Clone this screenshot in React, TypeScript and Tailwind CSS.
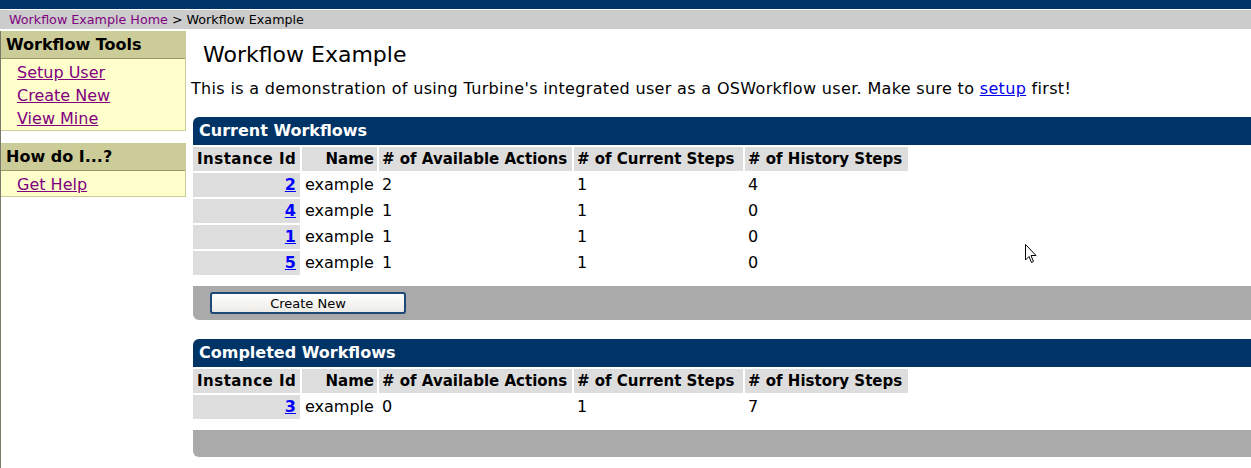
import React from "react";

const FONT = { fontFamily: '"DejaVu Sans", Verdana, sans-serif' };

type Row = { id: string; name: string; actions: string; current: string; history: string };

const CURRENT: Row[] = [
  { id: "2", name: "example", actions: "2", current: "1", history: "4" },
  { id: "4", name: "example", actions: "1", current: "1", history: "0" },
  { id: "1", name: "example", actions: "1", current: "1", history: "0" },
  { id: "5", name: "example", actions: "1", current: "1", history: "0" },
];

const COMPLETED: Row[] = [
  { id: "3", name: "example", actions: "0", current: "1", history: "7" },
];

const GRID = "grid grid-cols-[107px_75px_193px_169px_163px] gap-[2px] w-[715px]";

function SideBox({ title, links }: { title: string; links: string[] }) {
  return (
    <div className="border-r border-b border-[#cccc99] bg-[#ffffcc]">
      <div className="h-[28px] bg-[#cccc99] border-b border-[#999966] pl-[5px] text-[16px] font-bold leading-[27px] text-black">
        {title}
      </div>
      <ul className="pl-[16px] pt-[2px]">
        {links.map((l) => (
          <li key={l} className="h-[23px] leading-[23px] text-[16px]">
            <a href="#" className="text-[#800080] underline">
              {l}
            </a>
          </li>
        ))}
      </ul>
    </div>
  );
}

function WorkflowTable({
  title,
  rows,
  button,
}: {
  title: string;
  rows: Row[];
  button?: boolean;
}) {
  const head = "bg-[#dddddd] h-[24px] leading-[24px] text-[15px] font-bold text-black px-[3px] whitespace-nowrap";
  const cell = "h-[24px] leading-[24px] text-[16px] text-black px-[3px]";
  return (
    <section>
      <div className="h-[28px] bg-[#003366] rounded-tl-[6px] pl-[6px] text-[16px] font-bold leading-[28px] text-white">
        {title}
      </div>
      <div className={`${GRID} pt-[2px]`}>
        <div className={`${head} pl-[4px] tracking-[0.5px]`}>Instance Id</div>
        <div className={`${head} text-right`}>Name</div>
        <div className={head}># of Available Actions</div>
        <div className={head}># of Current Steps</div>
        <div className={head}># of History Steps</div>
        {rows.map((r) => (
          <React.Fragment key={r.id}>
            <div className={`${cell} bg-[#dddddd] text-right pr-[4px]`}>
              <a href="#" className="font-bold text-[#0000ff] underline">
                {r.id}
              </a>
            </div>
            <div className={cell}>{r.name}</div>
            <div className={cell}>{r.actions}</div>
            <div className={cell}>{r.current}</div>
            <div className={cell}>{r.history}</div>
          </React.Fragment>
        ))}
      </div>
      <div
        className={`mt-[11px] bg-[#aaaaaa] rounded-bl-[6px] flex items-center pl-[17px] ${
          button ? "h-[34px]" : "h-[27px]"
        }`}
      >
        {button && (
          <button className="w-[196px] h-[22px] rounded-[3px] border-2 border-[#1f4778] bg-gradient-to-b from-white to-[#ecebe6] text-[13px] text-black leading-none">
            Create New
          </button>
        )}
      </div>
    </section>
  );
}

export default function App() {
  return (
    <div className="relative w-[1251px] h-[468px] bg-white overflow-hidden" style={FONT}>
      <div className="h-[9px] bg-[#003366]" />
      <div className="mt-px h-[19px] bg-[#cccccc] pl-[9px] text-[12.7px] leading-[19px] text-black">
        <a href="#" className="text-[#800080]">
          Workflow Example Home
        </a>{" "}
        &gt; Workflow Example
      </div>
      <div className="flex h-[439px] pt-[2px]">
        <aside className="w-[186px] shrink-0 border-l border-[#7a7a6a] flex flex-col gap-[12px]">
          <SideBox title="Workflow Tools" links={["Setup User", "Create New", "View Mine"]} />
          <SideBox title="How do I...?" links={["Get Help"]} />
        </aside>
        <main className="flex-1 pl-[5px]">
          <h1 className="pl-[12px] pt-[10px] text-[22px] leading-[28px] text-black">Workflow Example</h1>
          <p className="mt-[10px] text-[16px] tracking-[0.33px] leading-[20px] text-black whitespace-nowrap">
            This is a demonstration of using Turbine's integrated user as a OSWorkflow user. Make sure to{" "}
            <a href="#" className="text-[#0000ee] underline">
              setup
            </a>{" "}
            first!
          </p>
          <div className="pl-[2px] pt-[18px] flex flex-col gap-[19px]">
            <WorkflowTable title="Current Workflows" rows={CURRENT} button />
            <WorkflowTable title="Completed Workflows" rows={COMPLETED} />
          </div>
        </main>
      </div>
      <svg
        className="absolute left-[1025px] top-[244px]"
        width="12"
        height="20"
        viewBox="0 0 12 20"
      >
        <path
          d="M0.5 0.5 L0.5 16 L4 12.5 L6.5 18.5 L8.5 17.5 L6 11.5 L11 11.5 Z"
          fill="white"
          stroke="black"
          strokeWidth="1"
          strokeLinejoin="miter"
        />
      </svg>
    </div>
  );
}
